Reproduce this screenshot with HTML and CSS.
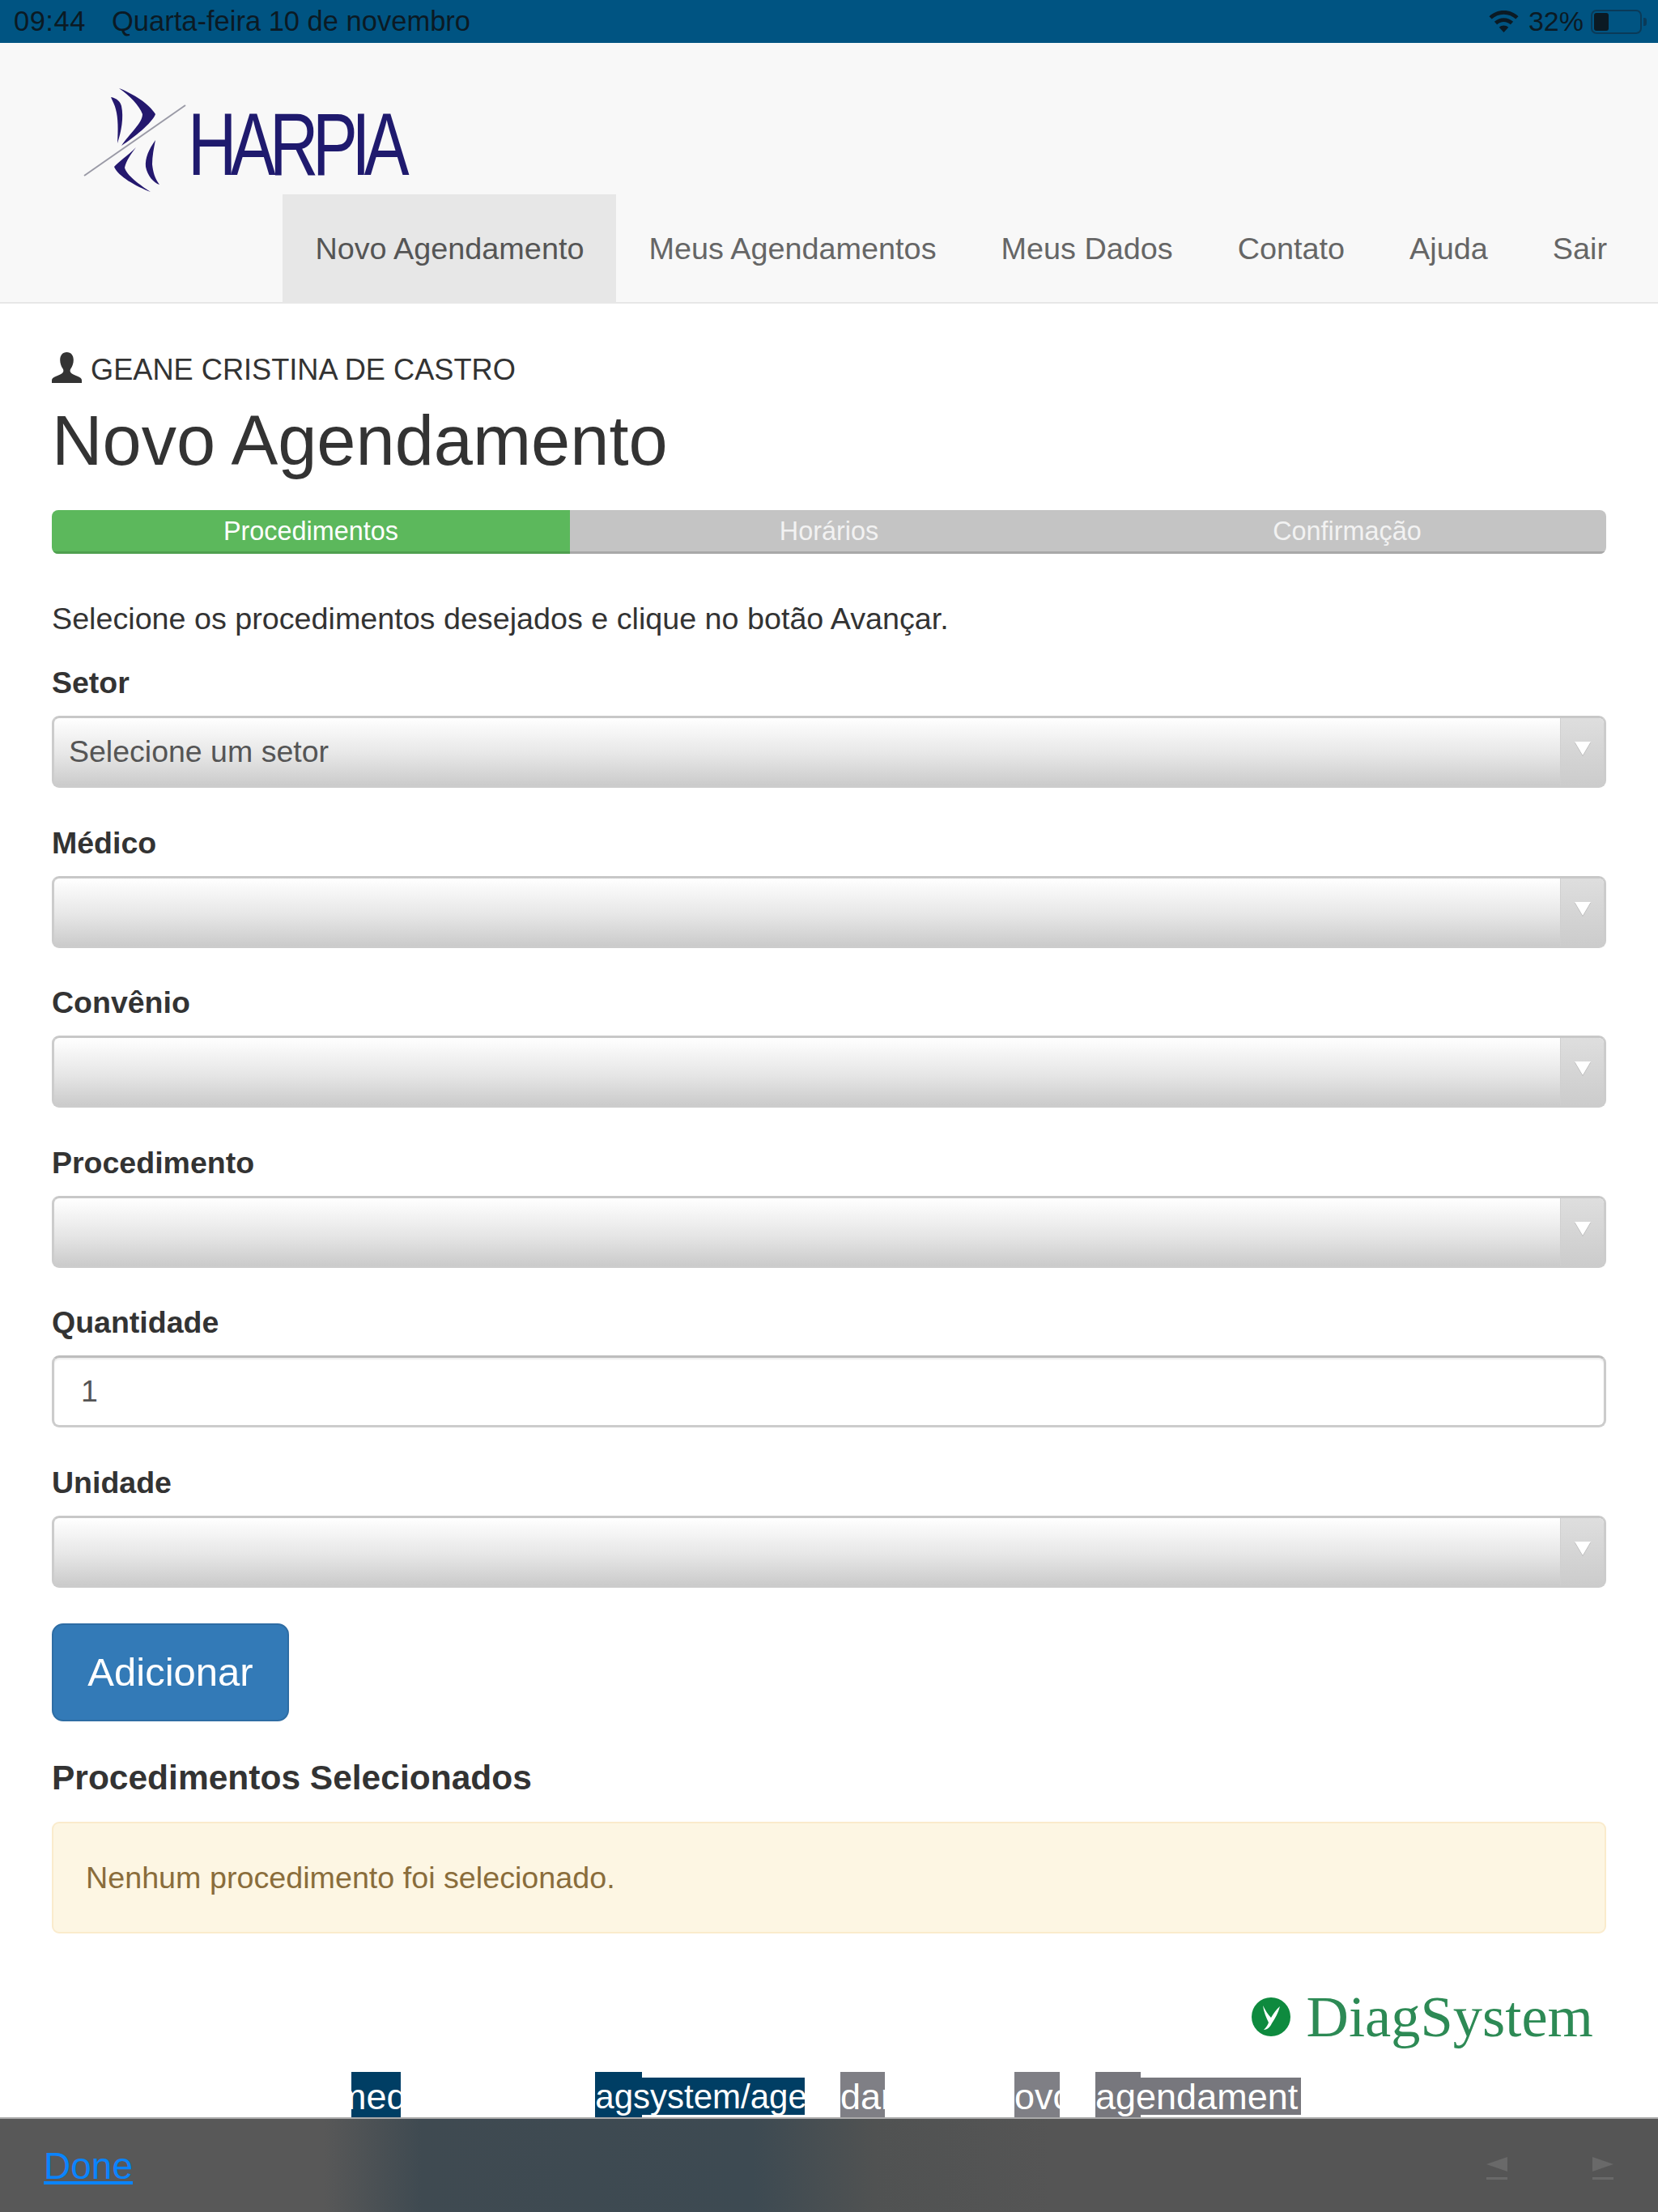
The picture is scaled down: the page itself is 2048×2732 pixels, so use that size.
FILE: index.html
```html
<!doctype html>
<html lang="pt">
<head>
<meta charset="UTF-8">
<title>Novo Agendamento</title>
<link rel="stylesheet" href="styles.css">
</head>
<body>

<div class="statusbar">
  <span class="clock">09:44</span>
  <span class="date">Quarta-feira 10 de novembro</span>
  <span class="status-right">
    <svg class="wifi" width="37" height="28" viewBox="0 0 37 28">
      <path d="M18.5 0C11.5 0 5.2 2.7.5 7.2l3.2 3.4C7.5 6.9 12.7 4.7 18.5 4.7s11 2.2 14.8 5.9l3.2-3.4C31.8 2.7 25.500 0 18.5 0z"/>
      <path d="M18.500 9.200c-4.500 0-8.600 1.800-11.600 4.600l3.200 3.400c2.200-2 5.100-3.300 8.400-3.300s6.200 1.300 8.400 3.300l3.200-3.400c-3-2.800-7.100-4.600-11.600-4.600z"/>
      <path d="M18.500 18.400c-2.200 0-4.200.9-5.700 2.300l5.700 6.300 5.700-6.300c-1.500-1.400-3.500-2.300-5.700-2.300z"/>
    </svg>
    <span class="battery-pct">32%</span>
    <span class="battery"><span class="battery-fill"></span></span>
    <span class="battery-nub"></span>
  </span>
</div>

<header class="navbar">
  <svg class="brand" width="420" height="135" viewBox="100 105 420 135">
    <path class="mark" d="M147 109C165 116 184 128 192 141C188 152 165 170 150 180C160 165 176 152 176 141C172 130 160 118 147 109z"/>
    <path class="mark" d="M137 120C144 121 149 126 150 131C153 145 150 162 145 177C146 160 146 146 143 135C142 130 139 125 137 120z"/>
    <path class="mark" d="M168 182C158 192 146 200 141 206C146 218 168 230 186 237C172 228 156 216 154 207C156 198 162 190 168 182z"/>
    <path class="mark" d="M192 173C184 184 179 195 180 206C182 217 190 226 197 228C191 220 189 212 188 203C188 193 190 183 192 173z"/>
    <path class="slash" d="M104 217L229 130" />
    <text class="brand-name" x="232" y="216" textLength="266" lengthAdjust="spacingAndGlyphs">HARPIA</text>
  </svg>
  <nav class="nav">
    <a class="nav-item active">Novo Agendamento</a>
    <a class="nav-item">Meus Agendamentos</a>
    <a class="nav-item">Meus Dados</a>
    <a class="nav-item">Contato</a>
    <a class="nav-item">Ajuda</a>
    <a class="nav-item">Sair</a>
  </nav>
</header>

<main class="content">
  <div class="user">
    <svg class="user-icon" width="37" height="38" viewBox="0 0 37 34" preserveAspectRatio="none">
      <path d="M18.500 0c-5.400 0-8.300 3.600-8.300 8.800 0 3.600 1.400 7.200 3.500 9.500.8 1 .9 2.800.2 3.900-1.200 1.700-5.200 3.300-9.300 4.700C1.700 28 0 29.500 0 31v3h37v-3c0-1.500-1.700-3-4.600-4.100-4.100-1.400-8.100-3-9.300-4.700-.7-1.100-.6-2.900.2-3.900 2.100-2.300 3.500-5.900 3.500-9.500C26.800 3.600 23.900 0 18.500 0z"/>
    </svg>
    GEANE CRISTINA DE CASTRO
  </div>
  <h1 class="title">Novo Agendamento</h1>

  <div class="steps">
    <div class="step current">Procedimentos</div>
    <div class="step">Horários</div>
    <div class="step">Confirmação</div>
  </div>

  <p class="intro">Selecione os procedimentos desejados e clique no botão Avançar.</p>

  <div class="field">
    <label class="field-label">Setor</label>
    <div class="select"><span class="select-text">Selecione um setor</span><span class="select-btn"><i class="arrow"></i></span></div>
  </div>
  <div class="field">
    <label class="field-label">Médico</label>
    <div class="select"><span class="select-text"></span><span class="select-btn"><i class="arrow"></i></span></div>
  </div>
  <div class="field">
    <label class="field-label">Convênio</label>
    <div class="select"><span class="select-text"></span><span class="select-btn"><i class="arrow"></i></span></div>
  </div>
  <div class="field">
    <label class="field-label">Procedimento</label>
    <div class="select"><span class="select-text"></span><span class="select-btn"><i class="arrow"></i></span></div>
  </div>
  <div class="field">
    <label class="field-label">Quantidade</label>
    <input class="text-input" type="text" value="1">
  </div>
  <div class="field">
    <label class="field-label">Unidade</label>
    <div class="select"><span class="select-text"></span><span class="select-btn"><i class="arrow"></i></span></div>
  </div>

  <button class="btn-add">Adicionar</button>

  <h3 class="selected-title">Procedimentos Selecionados</h3>
  <div class="alert">Nenhum procedimento foi selecionado.</div>

  <div class="vendor">
    <svg class="vendor-icon" width="50" height="50" viewBox="0 0 50 50">
      <circle cx="25" cy="25" r="24" fill="#0e8a3e"/>
      <path d="M15 11c3 6 6 11 10 15 3-5 6-10 11-14-2 8-6 15-10 21-2 4-5 8-10 8 3-3 5-6 6-9-3-6-6-13-7-21z" fill="#fff"/>
    </svg>
    <span class="vendor-name">DiagSystem</span>
  </div>

  <div class="url-strip">
    <span class="url-bit b1">med</span>
    <span class="url-bit b2">iagsystem/age</span>
    <span class="url-bit b3">dar</span>
    <span class="url-bit b4">ovo</span>
    <span class="url-bit b5">agendament</span>
  </div>
</main>

<footer class="toolbar">
  <a class="done-link">Done</a>
  <span class="toolbar-arrows">
    <svg width="28" height="28" viewBox="0 0 28 28"><path d="M27 0v18L1 9zM1 25h26v3H1z"/></svg>
    <svg width="28" height="28" viewBox="0 0 28 28"><path d="M1 0v18l26-9zM1 25h26v3H1z"/></svg>
  </span>
</footer>

</body>
</html>
```

FILE: styles.css
```css
* { box-sizing: border-box; }
html, body { margin: 0; padding: 0; }
body { width: 2048px; height: 2732px; overflow: hidden; display: flex; flex-direction: column; background: #fff; color: #333; font-family: "Liberation Sans", Arial, sans-serif; font-size: 37.700px; }

/* ios status bar */
.statusbar { height: 53px; flex: none; display: flex; align-items: center; background: #005482; color: #0b1a24; font-size: 34.500px; padding: 0 14px 0 17px; }
.clock { width: 121px; letter-spacing: .5px; }
.status-right { margin-left: auto; display: flex; align-items: center; }
.wifi { fill: #0b1a24; margin-right: 12px; }
.battery-pct { margin-right: 9px; font-size: 34px; }
.battery { width: 63px; height: 30px; border: 2px solid #0a3a58; border-radius: 7px; padding: 2px; display: block; }
.battery-fill { display: block; width: 18px; height: 100%; background: #0b1a24; border-radius: 3px; }
.battery-nub { width: 4px; height: 10px; margin-left: 2px; background: #0a3a58; border-radius: 0 3px 3px 0; }

/* navbar */
.navbar { height: 322px; flex: none; display: flex; flex-direction: column; justify-content: space-between; background: #f8f8f8; border-bottom: 2px solid #e7e7e7; padding: 52px 23px 0 100px; }
.brand { display: block; }
.mark { fill: #24186e; }
.slash { stroke: #9a9aa6; stroke-width: 2; fill: none; }
.brand-name { font-family: "Liberation Sans", sans-serif; font-size: 110px; letter-spacing: -10px; fill: #1f1a6e; }
.nav { display: flex; justify-content: flex-end; margin-bottom: -2px; }
.nav-item { padding: 0 40px; height: 135px; line-height: 135px; color: #666; white-space: nowrap; font-size: 37.800px; }
.nav-item.active { background: #e7e7e7; color: #555; }

/* main */
.content { flex: 1; padding: 0 64px; min-height: 0; display: flex; flex-direction: column; }
.user { display: flex; align-items: center; gap: 11px; height: 52px; margin-top: 56px; white-space: nowrap; font-size: 36.200px; }
.user-icon { fill: #333; margin-top: -6px; }
.title { font-size: 86.600px; font-weight: normal; line-height: 90px; margin: 16px 0 0; }

.steps { display: flex; height: 54px; margin-top: 41px; border-radius: 8px; overflow: hidden; flex: none; }
.step { flex: 1; background: #c4c4c4; color: #f2f2f2; font-size: 32.400px; line-height: 52px; text-align: center; border-bottom: 3px solid #a8a8a8; }
.step.current { background: #5cb85c; color: #fff; border-bottom-color: #4f9f4f; }

.intro { margin: 54px 0 0; line-height: 52px; }

.field { height: 155px; flex: none; font-size: 37.500px; }
.intro + .field { margin-top: 28px; }
.field + .field { margin-top: 42.600px; }
.field-label { display: block; font-weight: bold; line-height: 50px; margin: 0 0 16px; }
.select { display: flex; height: 89px; border: 3px solid #ccc; border-top-color: #c8c8c8; border-radius: 9px; overflow: hidden; background: linear-gradient(#fff, #e6e6e6 55%, #cbcbcb); }
.select-text { flex: 1; padding-left: 18px; line-height: 83px; color: #555; }
.select-btn { width: 54px; border-left: 1px solid #cfcfcf; background: linear-gradient(#dedede, #ccc); display: flex; justify-content: center; padding-top: 29px; }
.arrow { display: block; width: 0; height: 0; border-style: solid; border-width: 17px 10px 0; border-color: #fff transparent transparent; filter: drop-shadow(0 1px 0 #aaa); }
.text-input { display: block; width: 100%; height: 89px; padding: 0 33px; border: 3px solid #ccc; border-top-color: #bdbdbd; border-radius: 9px; background: #fff; color: #555; font: inherit; outline: none; box-shadow: inset 0 2px 2px rgba(0, 0, 0, .08); }

.btn-add { display: block; flex: none; width: 293px; height: 121px; margin-top: 44px; padding: 0; background: #337ab7; color: #fff; border: 2px solid #2e6da4; border-radius: 14px; font: inherit; font-size: 49px; }
.selected-title { font-size: 42.500px; font-weight: bold; line-height: 50px; margin: 45px 0 0; }
.alert { flex: none; height: 138px; margin-top: 29px; padding: 0 40px; line-height: 134px; background: #fdf6e3; color: #8a6d3b; border: 2px solid #faebcc; border-radius: 9px; }

.vendor { display: flex; align-items: center; justify-content: flex-end; gap: 19px; margin-top: 68px; padding-right: 16px; height: 70px; flex: none; }
.vendor-name { font-family: "Liberation Serif", serif; font-size: 72.500px; color: #2d8a55; }

.url-strip { display: flex; margin-top: auto; margin-left: 370px; height: 56px; color: #fff; font-size: 45px; flex: none; }
.url-bit { display: block; overflow: hidden; white-space: nowrap; line-height: 62px; background: #003e64; }
.b1 { width: 61px; margin-right: 240px; text-indent: -19px; }
.b2 { width: 259px; margin-right: 44px; text-indent: -9px; font-size: 42px; background: linear-gradient(#fff 7px, #003e64 7px, #003e64 53px, #fff 53px) 58px 0 no-repeat, linear-gradient(#003e64, #003e64) 0 0 / 58px 100% no-repeat; }
.b3 { width: 55px; margin-right: 160px; background: #7f7f85; }
.b4 { width: 56px; margin-right: 44px; background: #7f7f85; }
.b5 { width: 254px; background: linear-gradient(#fff 7px, #77777d 7px, #77777d 53px, #fff 53px) 56px 0 no-repeat, linear-gradient(#77777d, #77777d) 0 0 / 56px 100% no-repeat; }

/* bottom keyboard toolbar */
.toolbar { height: 117px; flex: none; display: flex; align-items: center; justify-content: space-between; padding: 0 54px 0 54px; border-top: 2px solid #aaa; background: linear-gradient(90deg, #585858 400px, #3f4a51 520px, #3d4a52 930px, #505252 1080px, #555 1300px); }
.done-link { color: #0a84ff; font-size: 46px; text-decoration: underline; font-weight: 500; }
.toolbar-arrows { display: flex; gap: 103px; margin-top: 6px; }
.toolbar-arrows svg { fill: #696969; display: block; }
```
